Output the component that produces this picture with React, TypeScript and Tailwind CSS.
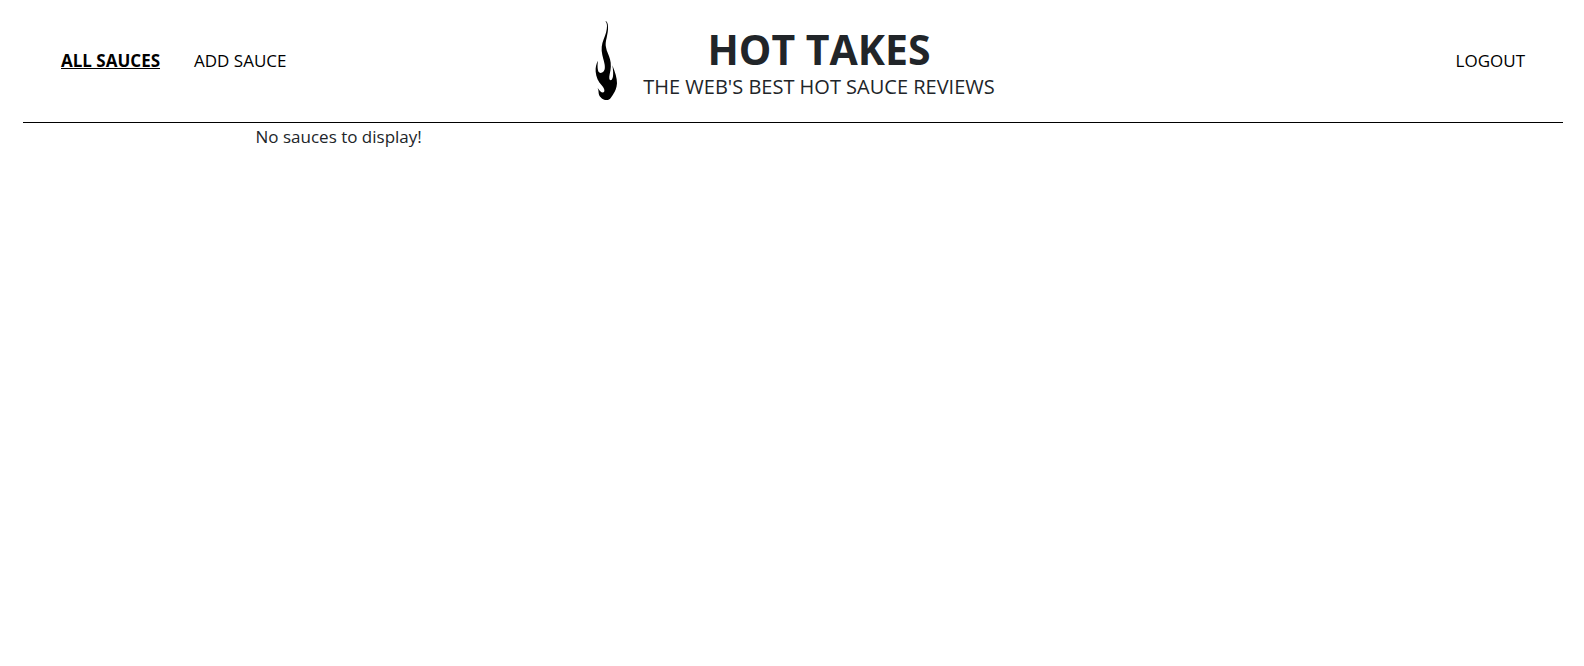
function Flame() {
  return (
    <svg viewBox="42 30 72 243" className="h-[81px] w-6" fill="#000" aria-hidden="true">
      <path d="M73 33C78 34 81 40 81 50C82 60 79 72 77 83C74 95 73 104 75 112C77 125 84 136 87 148C91 162 90 178 86 193C84 203 84 210 89 211C96 210 99 194 94 166C103 188 108 204 108 220C107 235 103 243 97 252C91 262 87 270 78 270L72 270C62 267 54 259 53 250C53 244 52 239 50 234C56 243 62 249 68 247C73 243 69 233 62 226C52 216 45 200 44 185C43 172 46 160 51 152C49 165 49 180 54 187C60 191 68 188 71 178C74 165 67 150 64 135C60 118 62 103 68 88C74 74 78 60 78 48C78 41 76 37 73 33Z" />
    </svg>
  );
}

export default function App() {
  return (
    <div className="min-h-screen bg-white pr-[21px] pl-[23px] font-['Open_Sans','Noto_Sans',sans-serif] text-[17px] leading-[27px] text-[#212529]">
      <header className="grid grid-cols-[1fr_auto_1fr] items-center border-b border-black px-[38px] pt-5 pb-[21px] text-black">
        <nav className="flex gap-[34px]">
          <a href="#sauces" className="font-bold underline">ALL SAUCES</a>
          <a href="#new">ADD SAUCE</a>
        </nav>
        <div className="flex items-center gap-6 pl-1">
          <Flame />
          <div className="text-center text-[#212529]">
            <h1 className="text-[41px] leading-[52px] font-bold">HOT TAKES</h1>
            <p className="text-[20px] leading-6">THE WEB'S BEST HOT SAUCE REVIEWS</p>
          </div>
        </div>
        <button type="button" className="justify-self-end">LOGOUT</button>
      </header>
      <main className="px-[15.1%]">
        <p>No sauces to display!</p>
      </main>
    </div>
  );
}
